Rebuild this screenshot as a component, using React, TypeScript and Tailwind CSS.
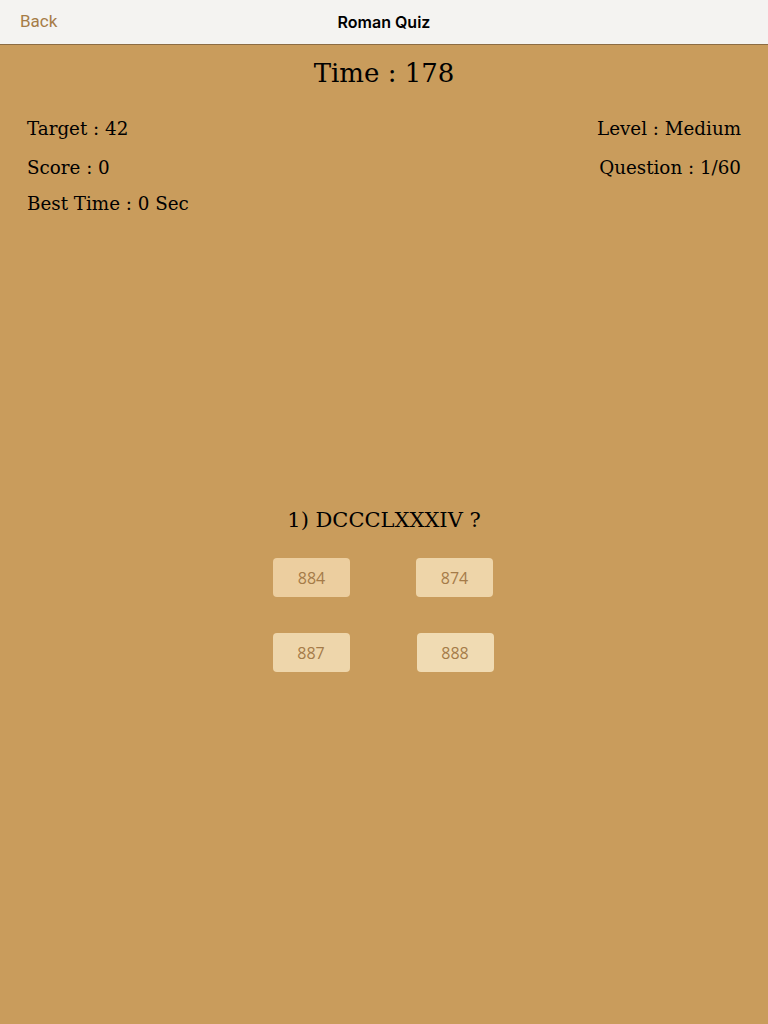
import React from "react";

const serif = { fontFamily: '"DejaVu Serif", serif' } as const;

export default function App() {
  return (
    <div className="w-[768px] h-[1024px] bg-[#c99c5c] flex flex-col">
      <div className="h-[45px] bg-[#f4f3f1] border-b border-[#8c6c44] flex items-center relative">
        <span className="pl-[20px] text-[17px] text-[#a67c47] font-['Roboto',sans-serif]">Back</span>
        <span className="absolute left-0 right-0 text-center text-[16px] font-semibold text-black font-['Inter',sans-serif] pointer-events-none">Roman Quiz</span>
      </div>
      <div style={serif} className="flex flex-col text-black">
        <div className="text-center text-[26px] leading-none pt-[15px] h-[62px]">Time : 178</div>
        <div className="flex justify-between px-[27px] pt-[2px]">
          <div className="flex flex-col text-[18.3px]">
            <div className="h-[40px] flex items-center">Target : 42</div>
            <div className="h-[38px] flex items-center">Score : 0</div>
            <div className="h-[34px] flex items-center">Best Time : 0 Sec</div>
          </div>
          <div className="flex flex-col items-end text-[18.3px]">
            <div className="h-[40px] flex items-center">Level : Medium</div>
            <div className="h-[38px] flex items-center">Question : 1/60</div>
          </div>
        </div>
        <div className="h-[285px]" />
        <div className="text-center text-[21px] h-[30px] flex items-center justify-center">1) DCCCLXXXIV ?</div>
        <div className="flex flex-col items-center gap-[36px] pt-[22px] pr-[2px] font-['Open_Sans',sans-serif] text-[16px] text-[#a57b48]">
          <div className="flex gap-[66px]">
            <div className="w-[77px] h-[39px] rounded-[4px] bg-[#ecce9f] flex items-center justify-center">884</div>
            <div className="w-[77px] h-[39px] rounded-[4px] bg-[#eed5a9] flex items-center justify-center">874</div>
          </div>
          <div className="flex gap-[67px] pl-[1px]">
            <div className="w-[77px] h-[39px] rounded-[4px] bg-[#eed6ab] flex items-center justify-center -ml-[1px]">887</div>
            <div className="w-[77px] h-[39px] rounded-[4px] bg-[#f0dbb3] flex items-center justify-center">888</div>
          </div>
        </div>
      </div>
    </div>
  );
}
